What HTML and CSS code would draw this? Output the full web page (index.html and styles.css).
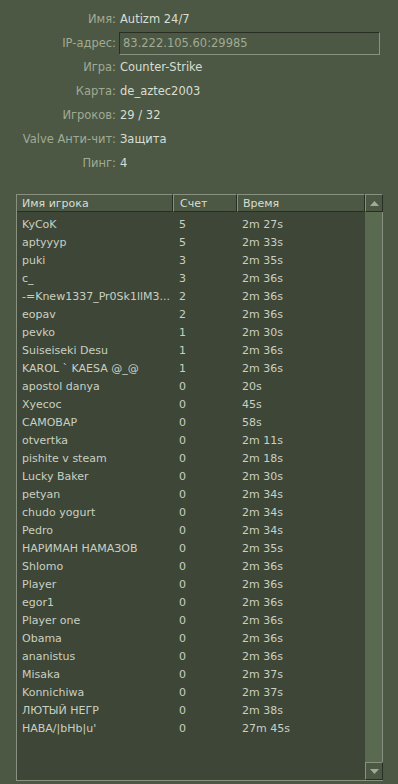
FILE: index.html
```html
<!DOCTYPE html>
<html>
<head>
<meta charset="utf-8">
<link rel="stylesheet" href="styles.css">
</head>
<body>
<div class="info">
  <div class="label">Имя:</div><div class="value">Autizm 24/7</div>
  <div class="label">IP-адрес:</div><div class="value"><div class="ipbox">83.222.105.60:29985</div></div>
  <div class="label">Игра:</div><div class="value">Counter-Strike</div>
  <div class="label">Карта:</div><div class="value">de_aztec2003</div>
  <div class="label">Игроков:</div><div class="value">29 / 32</div>
  <div class="label">Valve Анти-чит:</div><div class="value">Защита</div>
  <div class="label">Пинг:</div><div class="value">4</div>
</div>
<div class="players">
  <div class="list">
    <div class="header">
      <div class="hcell c-name">Имя игрока</div>
      <div class="hcell c-score">Счет</div>
      <div class="hcell c-time">Время</div>
    </div>
    <div class="rows">
      <div class="row"><span class="c-name">KyCoK</span><span class="c-score">5</span><span class="c-time">2m 27s</span></div>
      <div class="row"><span class="c-name">aptyyyp</span><span class="c-score">5</span><span class="c-time">2m 33s</span></div>
      <div class="row"><span class="c-name">puki</span><span class="c-score">3</span><span class="c-time">2m 35s</span></div>
      <div class="row"><span class="c-name">c_</span><span class="c-score">3</span><span class="c-time">2m 36s</span></div>
      <div class="row"><span class="c-name">-=Knew1337_Pr0Sk1llM3...</span><span class="c-score">2</span><span class="c-time">2m 36s</span></div>
      <div class="row"><span class="c-name">eopav</span><span class="c-score">2</span><span class="c-time">2m 36s</span></div>
      <div class="row"><span class="c-name">pevko</span><span class="c-score">1</span><span class="c-time">2m 30s</span></div>
      <div class="row"><span class="c-name">Suiseiseki Desu</span><span class="c-score">1</span><span class="c-time">2m 36s</span></div>
      <div class="row"><span class="c-name">KAROL ` KAESA @_@</span><span class="c-score">1</span><span class="c-time">2m 36s</span></div>
      <div class="row"><span class="c-name">apostol danya</span><span class="c-score">0</span><span class="c-time">20s</span></div>
      <div class="row"><span class="c-name">Xyecoc</span><span class="c-score">0</span><span class="c-time">45s</span></div>
      <div class="row"><span class="c-name">CAMOBAP</span><span class="c-score">0</span><span class="c-time">58s</span></div>
      <div class="row"><span class="c-name">otvertka</span><span class="c-score">0</span><span class="c-time">2m 11s</span></div>
      <div class="row"><span class="c-name">pishite v steam</span><span class="c-score">0</span><span class="c-time">2m 18s</span></div>
      <div class="row"><span class="c-name">Lucky Baker</span><span class="c-score">0</span><span class="c-time">2m 30s</span></div>
      <div class="row"><span class="c-name">petyan</span><span class="c-score">0</span><span class="c-time">2m 34s</span></div>
      <div class="row"><span class="c-name">chudo yogurt</span><span class="c-score">0</span><span class="c-time">2m 34s</span></div>
      <div class="row"><span class="c-name">Pedro</span><span class="c-score">0</span><span class="c-time">2m 34s</span></div>
      <div class="row"><span class="c-name">НАРИМАН НАМАЗОВ</span><span class="c-score">0</span><span class="c-time">2m 35s</span></div>
      <div class="row"><span class="c-name">Shlomo</span><span class="c-score">0</span><span class="c-time">2m 36s</span></div>
      <div class="row"><span class="c-name">Player</span><span class="c-score">0</span><span class="c-time">2m 36s</span></div>
      <div class="row"><span class="c-name">egor1</span><span class="c-score">0</span><span class="c-time">2m 36s</span></div>
      <div class="row"><span class="c-name">Player one</span><span class="c-score">0</span><span class="c-time">2m 36s</span></div>
      <div class="row"><span class="c-name">Obama</span><span class="c-score">0</span><span class="c-time">2m 36s</span></div>
      <div class="row"><span class="c-name">ananistus</span><span class="c-score">0</span><span class="c-time">2m 36s</span></div>
      <div class="row"><span class="c-name">Misaka</span><span class="c-score">0</span><span class="c-time">2m 37s</span></div>
      <div class="row"><span class="c-name">Konnichiwa</span><span class="c-score">0</span><span class="c-time">2m 37s</span></div>
      <div class="row"><span class="c-name">ЛЮТЫЙ НЕГР</span><span class="c-score">0</span><span class="c-time">2m 38s</span></div>
      <div class="row"><span class="c-name">HABA/|bHb|u'</span><span class="c-score">0</span><span class="c-time">27m 45s</span></div>
    </div>
  </div>
  <div class="scrollbar">
    <div class="sbtn"><svg width="9" height="5" viewBox="0 0 9 5"><path d="M4.5 0 L9 5 L0 5 Z" fill="#a0aa95"/></svg></div>
    <div class="track"></div>
    <div class="sbtn"><svg width="9" height="5" viewBox="0 0 9 5"><path d="M0 0 L9 0 L4.5 5 Z" fill="#a0aa95"/></svg></div>
  </div>
</div>
</body>
</html>
```
FILE: styles.css
```css
html, body {
  margin: 0;
  padding: 0;
  background: #4c5844;
  height: 784px;
  overflow: hidden;
}
body {
  font-family: "DejaVu Sans", Tahoma, sans-serif;
  font-size: 11px;
  color: #d8ded3;
}
.info {
  display: grid;
  grid-template-columns: 116px 1fr;
  column-gap: 4px;
  grid-auto-rows: 24px;
  align-items: center;
  margin-top: 7px;
  padding-right: 18px;
  font-size: 11.5px;
}
.label {
  text-align: right;
  color: #a0aa95;
  white-space: nowrap;
}
.value {
  white-space: nowrap;
}
.ipbox {
  box-sizing: border-box;
  height: 23px;
  margin-left: -1px;
  padding: 0 3px;
  line-height: 21px;
  color: #a0aa95;
  border: 1px solid;
  border-color: #292e23 #889180 #889180 #292e23;
}
.players {
  display: flex;
  margin: 19px 15px 0 16px;
  height: 587px;
  box-sizing: border-box;
}
.list {
  flex: 1;
  display: flex;
  flex-direction: column;
  background: #3e4637;
  border-left: 1px solid #889180;
  border-bottom: 1px solid #889180;
  min-width: 0;
}
.header {
  display: flex;
  height: 18px;
  flex: none;
}
.hcell {
  box-sizing: border-box;
  height: 18px;
  line-height: 16px;
  padding-top: 1px;
  background: #4c5844;
  border: 1px solid;
  border-color: #889180 #292e23 #292e23 #889180;
  color: #d8ded3;
  white-space: nowrap;
  overflow: hidden;
}
.header .hcell:first-child { border-left: none; }
.header .c-name { width: 156px; padding-left: 5px; }
.header .c-score { width: 64px; padding-left: 6px; }
.header .c-time { flex: 1; padding-left: 5px; }
.rows {
  padding-top: 4px;
}
.row {
  display: flex;
  height: 18px;
  line-height: 18px;
  color: #c9d0c2;
  white-space: nowrap;
}
.row .c-name {
  width: 157px;
  padding-left: 5px;
  overflow: hidden;
  flex: none;
}
.row .c-score { width: 63px; flex: none; }
.row .c-time { flex: 1; }
.scrollbar {
  width: 18px;
  display: flex;
  flex-direction: column;
  background: #5a6a50;
  border-right: 1px solid #889180;
  border-bottom: 1px solid #889180;
  box-sizing: border-box;
}
.sbtn {
  box-sizing: border-box;
  height: 18px;
  display: flex;
  align-items: center;
  justify-content: center;
  background: #4c5844;
  border: 1px solid;
  border-color: #889180 #292e23 #292e23 #889180;
  margin-right: -1px;
}
.track { flex: 1; }
```
